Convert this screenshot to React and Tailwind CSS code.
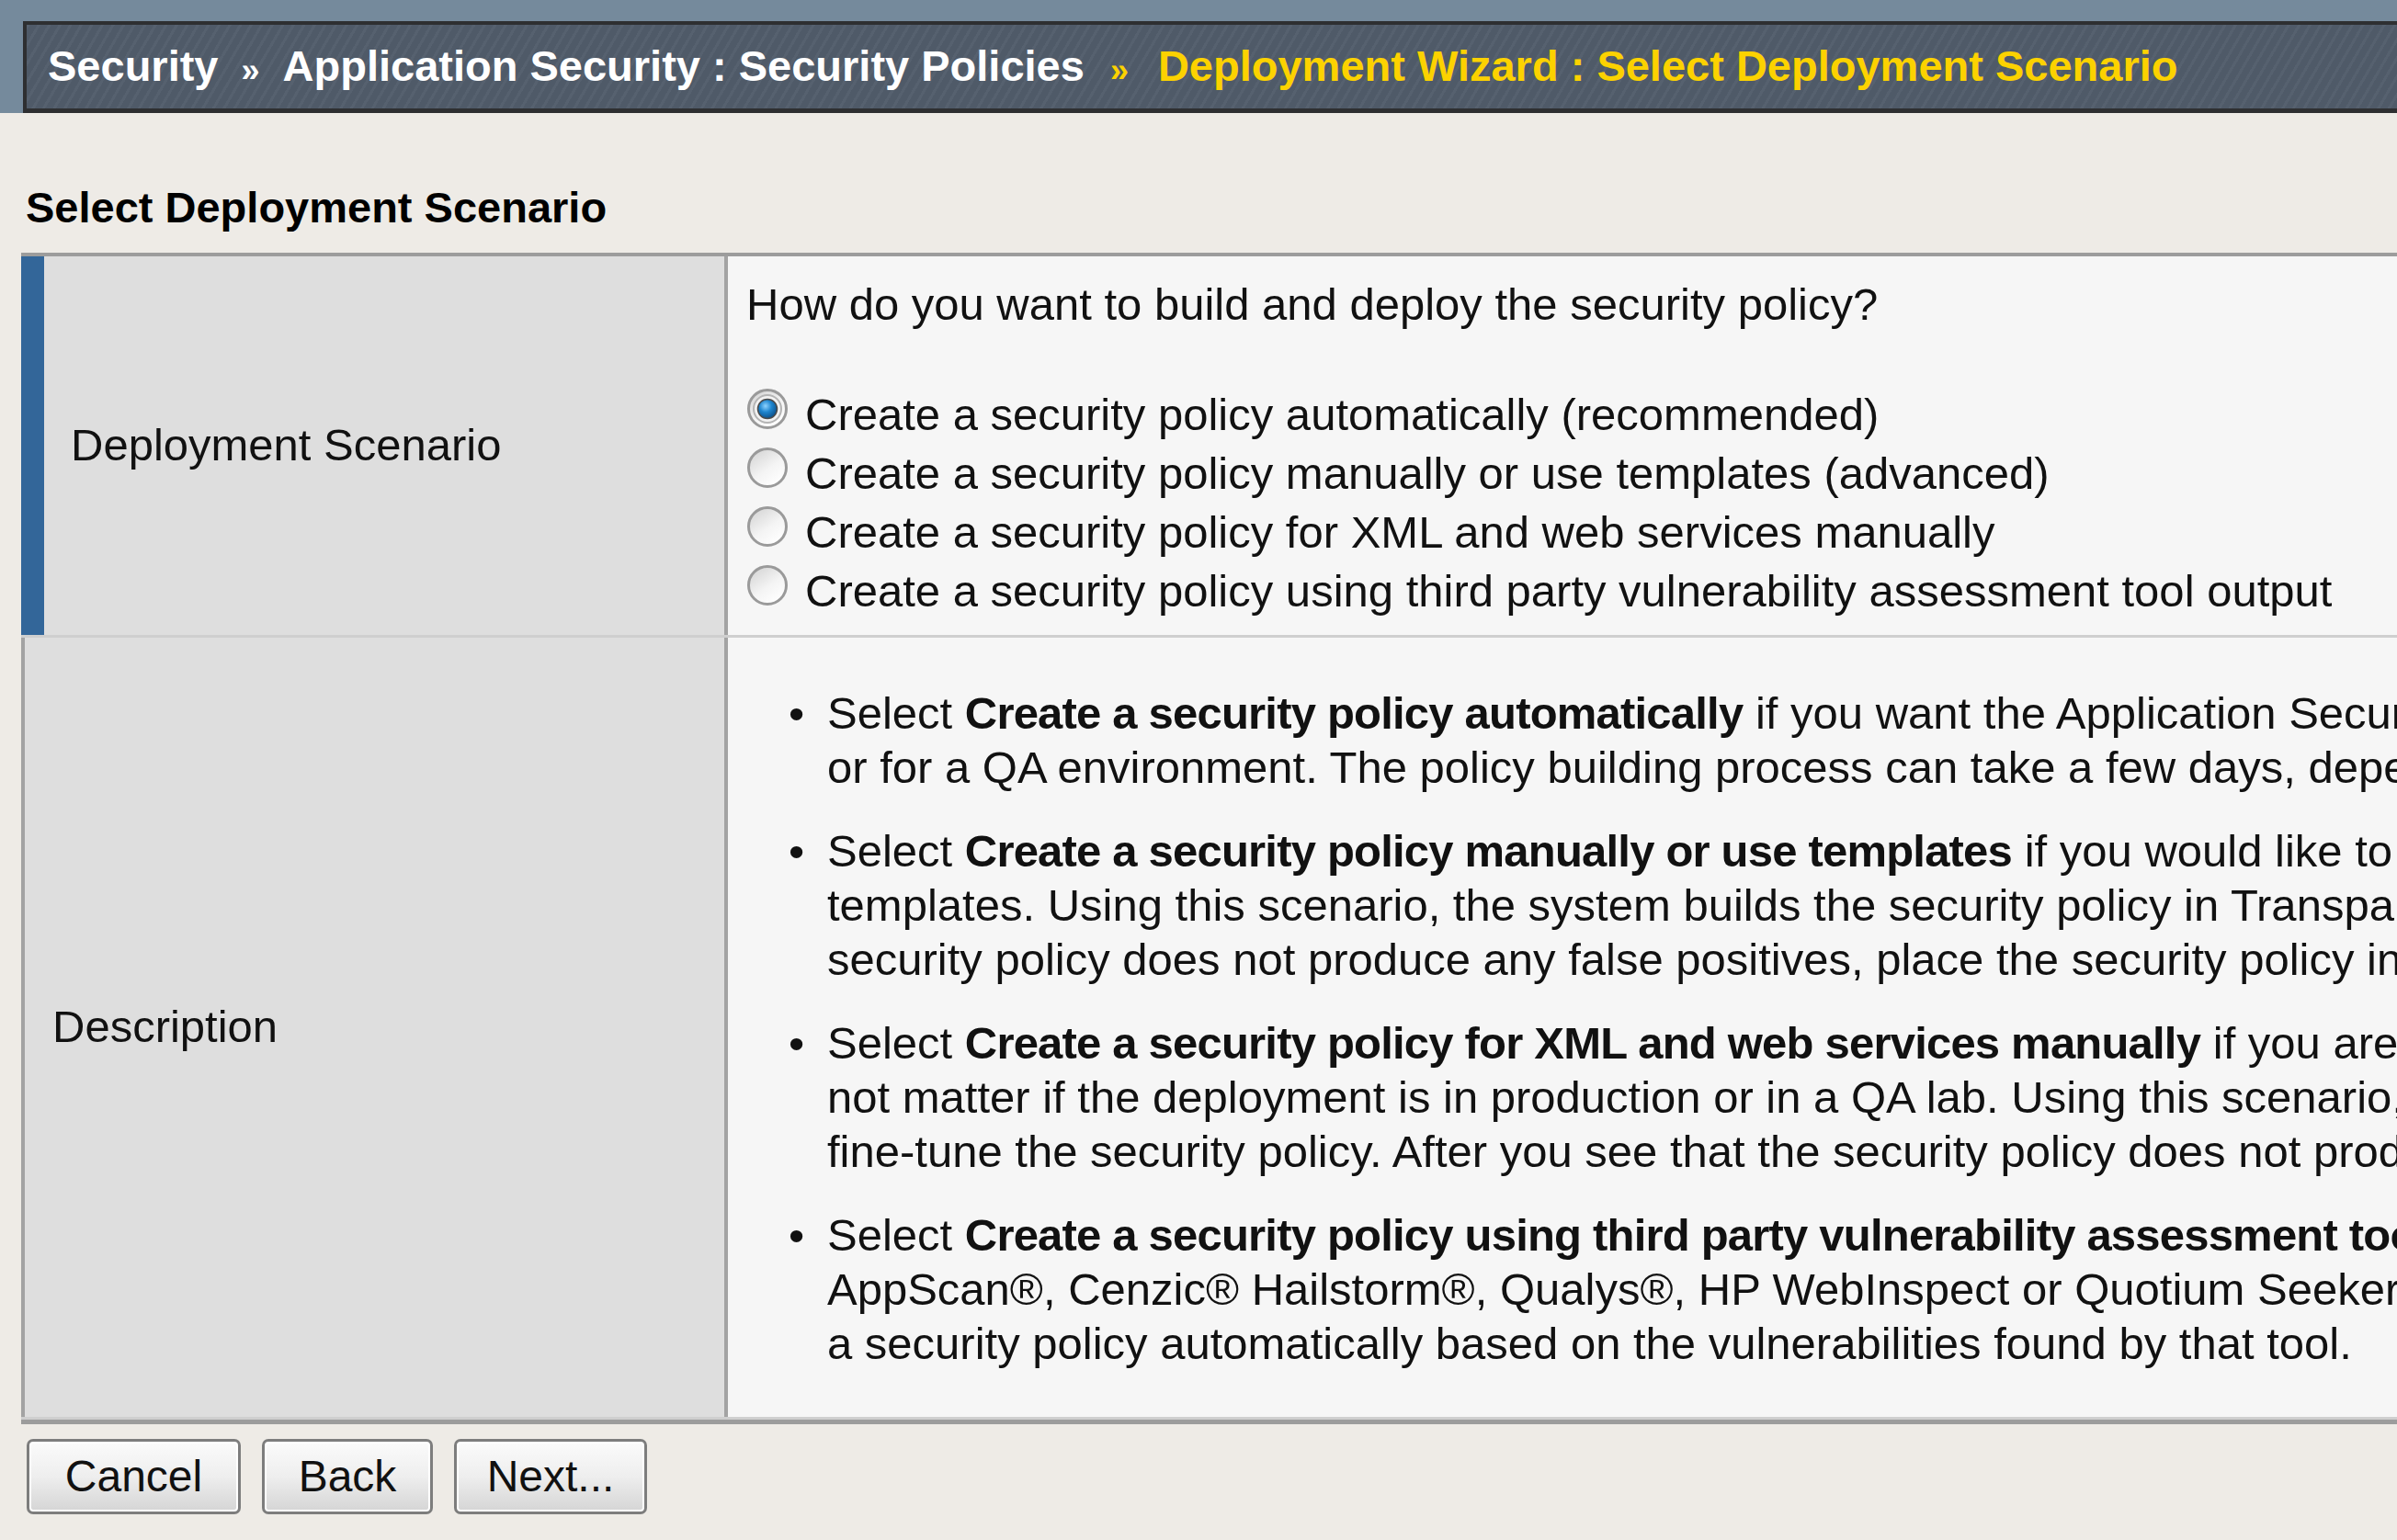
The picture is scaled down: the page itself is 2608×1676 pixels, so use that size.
import React from 'react';

const Radio = ({ checked }) => (
  <svg width="46" height="46" viewBox="0 0 46 46" className="shrink-0">
    <defs>
      <linearGradient id="ring" x1="0" y1="0" x2="0.7" y2="1">
        <stop offset="0" stopColor="#cfcfcf" />
        <stop offset="0.6" stopColor="#f4f4f4" />
        <stop offset="1" stopColor="#ffffff" />
      </linearGradient>
      <radialGradient id="dot" cx="0.4" cy="0.35" r="0.7">
        <stop offset="0" stopColor="#8fd3ff" />
        <stop offset="0.45" stopColor="#1f86cf" />
        <stop offset="1" stopColor="#0a4a82" />
      </radialGradient>
    </defs>
    <circle cx="23" cy="23" r="20.5" fill="url(#ring)" stroke="#9a9a9a" strokeWidth="3" />
    {checked && (
      <>
        <circle cx="23" cy="23" r="15" fill="#f2f2f2" stroke="#b4b4b4" strokeWidth="2" />
        <circle cx="23" cy="23" r="10.5" fill="url(#dot)" stroke="#4a4a4a" strokeWidth="1.5" />
      </>
    )}
  </svg>
);

const options = [
  'Create a security policy automatically (recommended)',
  'Create a security policy manually or use templates (advanced)',
  'Create a security policy for XML and web services manually',
  'Create a security policy using third party vulnerability assessment tool output',
];

const bullets = [
  {
    bold: 'Create a security policy automatically',
    lines: [
      ' if you want the Application Security Manager to create and deploy the security policy for you in a production environment',
      'or for a QA environment. The policy building process can take a few days, depending on the amount of traffic.',
    ],
  },
  {
    bold: 'Create a security policy manually or use templates',
    lines: [
      ' if you would like to create the security policy yourself, or base it on one of the predefined',
      'templates. Using this scenario, the system builds the security policy in Transparent mode. After you fine-tune the policy and verify that the',
      'security policy does not produce any false positives, place the security policy in Blocking mode.',
    ],
  },
  {
    bold: 'Create a security policy for XML and web services manually',
    lines: [
      ' if you are protecting XML or web services applications. It does',
      'not matter if the deployment is in production or in a QA lab. Using this scenario, the system builds the security policy in Transparent mode so you can',
      'fine-tune the security policy. After you see that the security policy does not produce any false positives, place it in Blocking mode.',
    ],
  },
  {
    bold: 'Create a security policy using third party vulnerability assessment tool output',
    lines: [
      ' if you have output from IBM® Rational®',
      'AppScan®, Cenzic® Hailstorm®, Qualys®, HP WebInspect or Quotium Seeker vulnerability assessment tools. The system creates',
      'a security policy automatically based on the vulnerabilities found by that tool.',
    ],
  },
];

const Button = ({ label, width }) => (
  <button
    className={`${width} h-[82px] rounded-[7px] border-[3px] border-[#7d7d7d] bg-gradient-to-b from-[#fbfbfb] via-[#eeeeee] to-[#d5d5d5] shadow-[inset_0_0_0_2px_#ffffff] text-[48px] leading-none text-[#111]`}
  >
    {label}
  </button>
);

export default function App() {
  return (
    <div className="w-[2608px] h-[1676px] overflow-hidden bg-[#eeebe6] font-['Liberation_Sans','Arial',sans-serif] text-[#111]">
      {/* breadcrumb */}
      <div className="bg-[#758a9c] pl-[25px] pt-[23px]">
        <div className="h-[100px] border-t-[4px] border-b-[5px] border-l-[4px] border-[#2e2f31] bg-[repeating-linear-gradient(120deg,#56616f_0px,#56616f_3px,#4f5a68_3px,#4f5a68_10px)] flex items-center pl-[23px] text-[47px] font-bold text-white whitespace-nowrap">
          <span>Security</span>
          <span className="mx-[25px] text-[36px] self-end mb-[14px]">»</span>
          <span>Application Security : Security Policies</span>
          <span className="ml-[28px] mr-[32px] text-[36px] self-end mb-[14px] text-[#fcd200]">»</span>
          <span className="text-[#fcd200]">Deployment Wizard : Select Deployment Scenario</span>
        </div>
      </div>

      <h1 className="mt-[75px] ml-[28px] text-[47px] leading-[56px] font-bold text-black">Select Deployment Scenario</h1>

      {/* table */}
      <div className="mt-[21px] ml-[23px] w-[2700px] border-t-[4px] border-b-[5px] border-[#9c9c9c] text-[49px]">
        <div className="flex border-b-[3px] border-[#cfcfcf]">
          <div className="w-[25px] shrink-0 bg-[#336699]" />
          <div className="w-[740px] shrink-0 bg-[#dedede] flex items-center pl-[29px]">Deployment Scenario</div>
          <div className="flex-1 border-l-[4px] border-[#a3a3a3] bg-[#f6f6f6] pl-[20px] pt-[24px] pb-[22px]">
            <div className="leading-[56px] whitespace-nowrap">How do you want to build and deploy the security policy?</div>
            <div className="mt-[54px]">
              {options.map((o, i) => (
                <div key={o} className="flex items-center h-[64px] whitespace-nowrap">
                  <Radio checked={i === 0} />
                  <span className="ml-[18px] pt-[12px] leading-[52px]">{o}</span>
                </div>
              ))}
            </div>
          </div>
        </div>

        <div className="flex border-b-[3px] border-[#cfcfcf]">
          <div className="w-[765px] shrink-0 border-l-[4px] border-[#a3a3a3] bg-[#dedede] flex items-center pl-[30px]">Description</div>
          <div className="flex-1 border-l-[4px] border-[#a3a3a3] bg-[#f6f6f6] pl-[66px] pt-[53px] pb-[50px] leading-[59px]">
            {bullets.map((b, i) => (
              <div key={b.bold} className={`flex ${i > 0 ? 'mt-[32px]' : ''}`}>
                <span className="w-[42px] shrink-0">•</span>
                <div className="whitespace-nowrap">
                  <div>
                    Select <span className="font-bold tracking-[-0.8px]">{b.bold}</span>
                    {b.lines[0]}
                  </div>
                  {b.lines.slice(1).map((l) => (
                    <div key={l}>{l}</div>
                  ))}
                </div>
              </div>
            ))}
          </div>
        </div>
      </div>

      <div className="flex gap-[23px] mt-[16px] ml-[29px]">
        <Button label="Cancel" width="w-[233px]" />
        <Button label="Back" width="w-[186px]" />
        <Button label="Next..." width="w-[210px]" />
      </div>
    </div>
  );
}
